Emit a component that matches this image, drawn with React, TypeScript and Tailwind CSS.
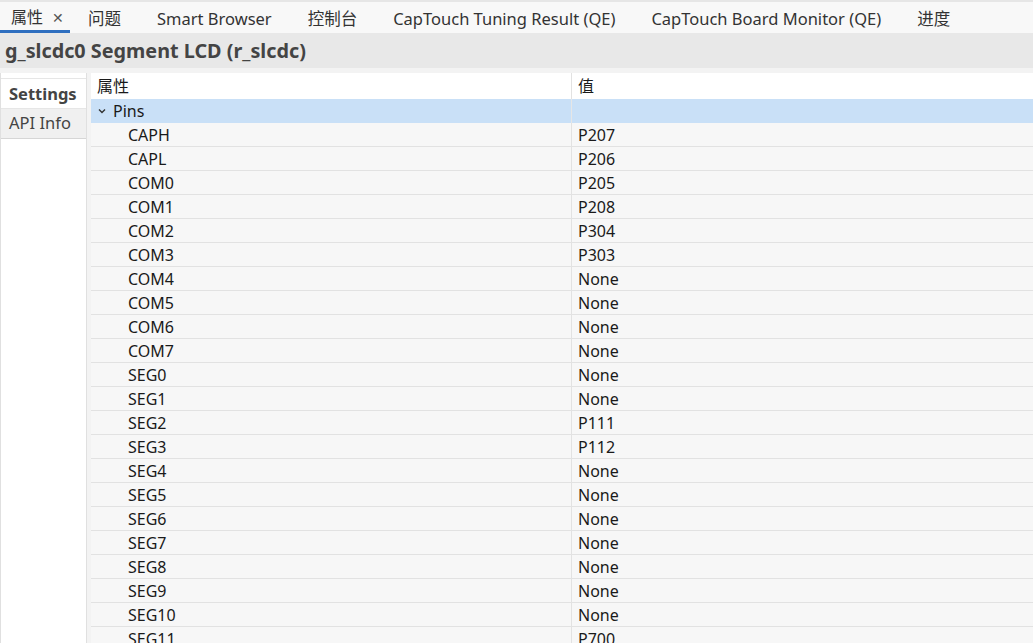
import React from "react";

const rows: [string, string][] = [
  ["CAPH", "P207"],
  ["CAPL", "P206"],
  ["COM0", "P205"],
  ["COM1", "P208"],
  ["COM2", "P304"],
  ["COM3", "P303"],
  ["COM4", "None"],
  ["COM5", "None"],
  ["COM6", "None"],
  ["COM7", "None"],
  ["SEG0", "None"],
  ["SEG1", "None"],
  ["SEG2", "P111"],
  ["SEG3", "P112"],
  ["SEG4", "None"],
  ["SEG5", "None"],
  ["SEG6", "None"],
  ["SEG7", "None"],
  ["SEG8", "None"],
  ["SEG9", "None"],
  ["SEG10", "None"],
  ["SEG11", "P700"],
];

const tabs = ["问题", "Smart Browser", "控制台", "CapTouch Tuning Result (QE)", "CapTouch Board Monitor (QE)", "进度"];

export default function App() {
  return (
    <div
      className="w-[1033px] h-[643px] overflow-hidden bg-[#f3f3f3] flex flex-col text-[#1a1a1a]"
      style={{ fontFamily: '"Noto Sans", "Noto Sans CJK SC", sans-serif' }}
    >
      {/* tab bar */}
      <div className="h-[33px] shrink-0 bg-[#f8f8f8] border-t-2 border-[#e6e6e6] flex items-stretch text-[16.5px] text-[#333]">
        <div className="flex items-center pt-[2px] pl-[11px] pr-[6px] border-b-[3px] border-[#2f6fc0] bg-[#f8f8f8]">
          <span className="text-[16px]">属性</span>
          <span className="ml-[9px] text-[14px] text-[#555]">✕</span>
        </div>
        {tabs.map((t) => (
          <div key={t} className="flex items-center pt-[3px] px-[18px] first:pl-[16px]">
            {t}
          </div>
        ))}
      </div>
      {/* title */}
      <div className="h-[35px] shrink-0 bg-[#e8e8e8] flex items-center pl-[5px] text-[19.8px] font-bold text-[#444]">
        g_slcdc0 Segment LCD (r_slcdc)
      </div>
      {/* body */}
      <div className="flex-1 flex pt-[5px] min-h-0">
        <div className="w-[87px] shrink-0 bg-white border-l border-[#e0e0e0] border-r border-[#d8d8d8] pt-[5px] flex flex-col">
          <div className="h-[31px] pt-[1px] border-t border-[#e6e6e6] border-b border-[#dcdcdc] flex items-center pl-[8px] text-[16.5px] font-bold text-[#444] bg-white">
            Settings
          </div>
          <div className="h-[30px] border-b border-[#d6d6d6] flex items-center pl-[8px] text-[16.5px] text-[#444] bg-[#f0f0f0]">
            API Info
          </div>
        </div>
        <div className="flex-1 ml-[4px] flex flex-col text-[16px]">
          <div className="h-[26px] shrink-0 bg-white flex">
            <div className="w-[481px] pl-[6px] flex items-center border-r border-[#e2e2e2]">属性</div>
            <div className="flex-1 pl-[6px] flex items-center">值</div>
          </div>
          <div className="h-[24px] shrink-0 bg-[#c9e0f7] flex">
            <div className="w-[481px] flex items-center pl-[6px] border-r border-[#e6e6e6]">
              <svg width="10" height="10" viewBox="0 0 10 10" className="mr-[6px]">
                <path d="M2 3.5 L5 6.5 L8 3.5" fill="none" stroke="#333" strokeWidth="1.4" />
              </svg>
              Pins
            </div>
            <div className="flex-1" />
          </div>
          {rows.map(([k, v]) => (
            <div key={k} className="h-[24px] shrink-0 bg-[#f7f7f7] flex border-b border-[#e2e2e2]">
              <div className="w-[481px] pl-[37px] flex items-center border-r border-[#e2e2e2]">{k}</div>
              <div className="flex-1 pl-[6px] flex items-center">{v}</div>
            </div>
          ))}
        </div>
      </div>
    </div>
  );
}
